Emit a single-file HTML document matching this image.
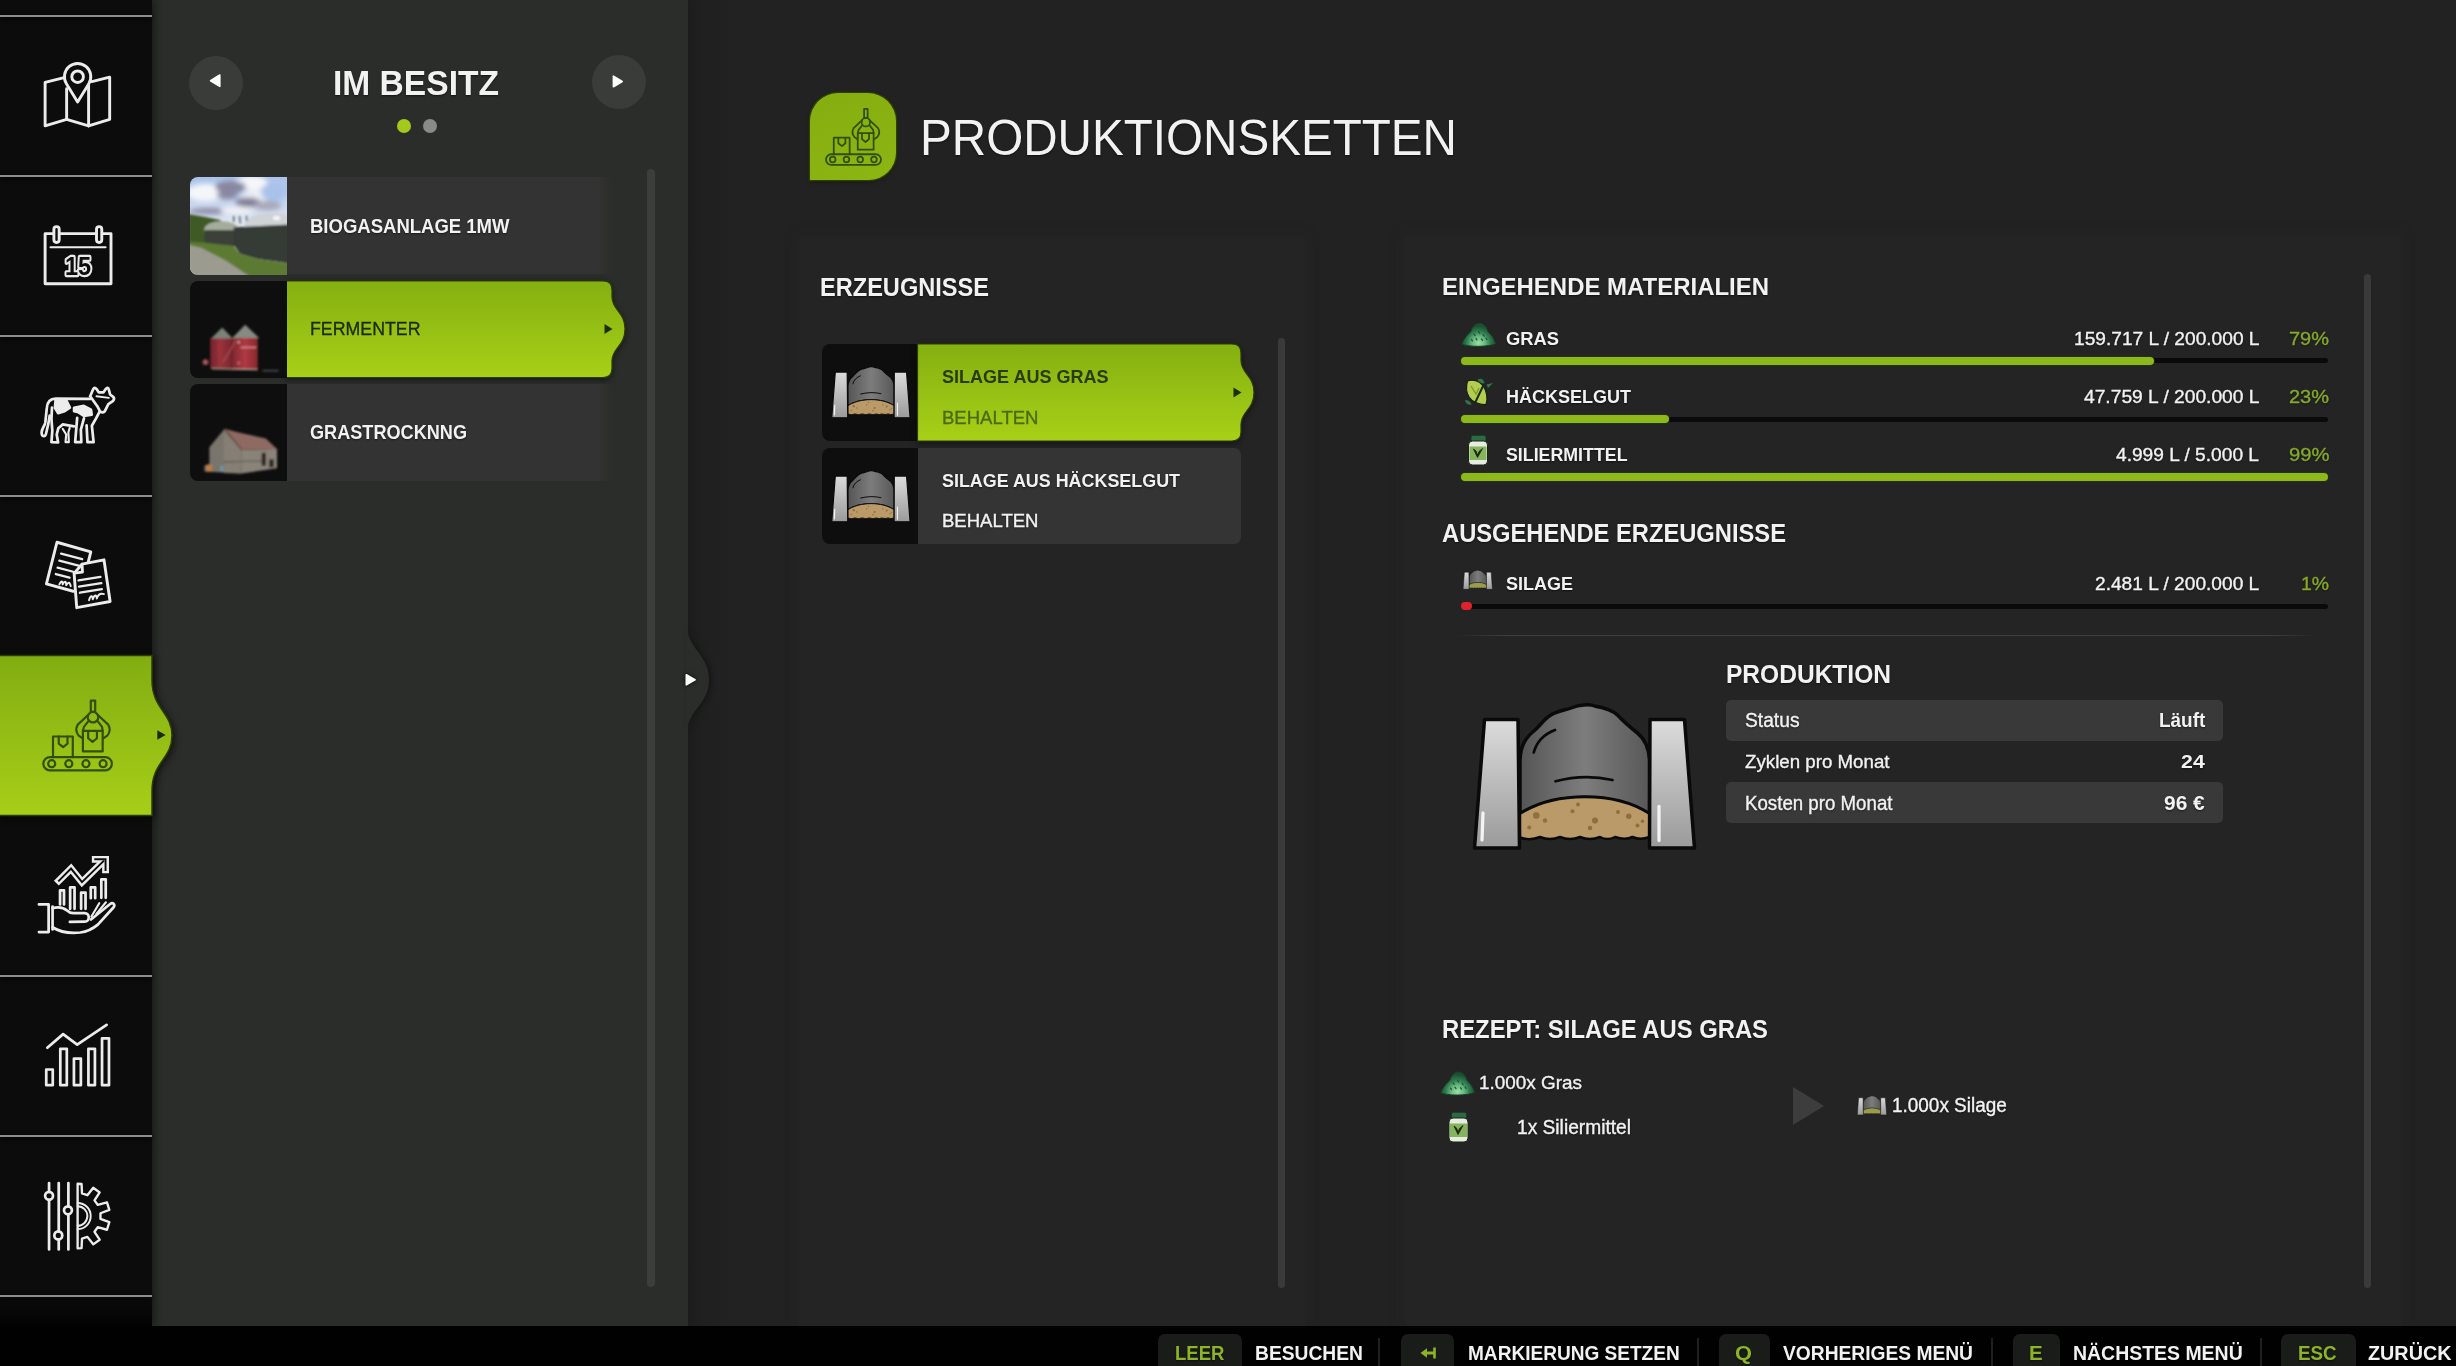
<!DOCTYPE html>
<html lang="de">
<head>
<meta charset="utf-8">
<title>Produktionsketten</title>
<style>
*{box-sizing:border-box;margin:0;padding:0}
html,body{width:2456px;height:1366px;overflow:hidden;background:#222222}
body{position:relative;font-family:"Liberation Sans",sans-serif;color:#f2f2f2}
.abs,.t,.box{position:absolute}
.t{white-space:pre;transform-origin:0 0;display:block}
.sh{text-shadow:0 1px 2px rgba(0,0,0,.55)}
.rg{-webkit-text-stroke:.35px currentColor}
svg{position:absolute;overflow:visible}
/* ---------- backgrounds ---------- */
#main-bg{left:688px;top:0;width:1768px;height:1326px;background:linear-gradient(90deg,#1f1f1f 0,#202020 20px,#222222 48px,#222222 100%)}
.pane{background:#242424;box-shadow:0 0 9px 3px #242424}
#pane-list{left:799px;top:238px;width:506px;height:1088px}
#pane-detail{left:1405px;top:236px;width:996px;height:1090px}
#side2{left:152px;top:0;width:536px;height:1326px;background:#2b2d2a;box-shadow:3px 0 10px rgba(0,0,0,.10)}
#sidebar{left:0;top:0;width:152px;height:1326px;background:#0c0c0c;box-shadow:3px 0 7px rgba(0,0,0,.4)}
.sep{left:0;width:152px;height:2px;background:#8e8e8e;box-shadow:0 2px 5px rgba(0,0,0,.9)}
#footer{left:0;top:1326px;width:2456px;height:40px;background:#010101}
/* ---------- generic pieces ---------- */
.scroll{width:7px;border-radius:4px;background:#3a3a3a}
.item-body{background:#333433;border-radius:0 7px 7px 0}
.fade{border-radius:0;background:linear-gradient(90deg,#323332 0,#323332 95.5%,rgba(50,51,50,0) 100%)}
.thumb{background:#0e0e0e;border-radius:8px 0 0 8px;overflow:hidden}
.track{height:5px;background:#0a0a0a;border-radius:3px}
.fill{height:8px;border-radius:4px;background:#8db81b;box-shadow:0 0 0 1px rgba(40,60,5,.55)}
.row{height:41px;border-radius:5px;background:#393939}
.key{top:1334px;height:32px;border-radius:7px 7px 0 0;background:#191c18}
.vsep{top:1338px;width:2px;height:28px;background:#1f1f1f}
.circle{width:54px;height:54px;border-radius:50%;background:#3a3c3a}
</style>
</head>
<body>

<!-- ======================= MAIN AREA ======================= -->
<main>
<div id="main-bg" class="abs"></div>

<header>
  <div class="abs" id="title-icon" style="left:810px;top:92.5px;width:86px;height:87px;border-radius:28px 28px 27px 0;background:linear-gradient(160deg,#85ad10 0,#8cb613 100%);box-shadow:0 0 0 1.3px #2c3f06, 0 2px 4px rgba(0,0,0,.35)"></div>
  <svg style="left:0;top:0" width="2456" height="200"><g transform="translate(804.84,88.29) scale(0.07054)" fill="none" stroke="#304f09" stroke-width="25" stroke-linejoin="round" stroke-linecap="round">
<rect x="300" y="935" width="780" height="150" rx="75"/>
<circle cx="395" cy="1010" r="40"/><circle cx="590" cy="1010" r="40"/><circle cx="785" cy="1010" r="40"/><circle cx="980" cy="1010" r="40"/>
<path d="M410,935 L410,700 L635,700 L635,935"/>
<path d="M475,702 L475,780 L525,820 L575,780 L575,702"/>
<path d="M750,635 L750,870 L975,870 L975,635 Z"/>
<path d="M810,640 L810,720 L860,762 L910,720 L910,640"/>
<rect x="840" y="292" width="50" height="128"/>
<circle cx="865" cy="480" r="60"/>
<path d="M812,452 L692,565 C668,605 674,655 702,690 L748,722"/>
<path d="M918,452 L1038,565 C1062,605 1056,655 1028,690 L982,722"/>
<path d="M808,530 L762,590 L750,635 M922,530 L968,590 L975,635"/>
</g></svg>
  <h1><span class="t sh" style="left:920.0px;top:113.0px;font-size:49.5px;line-height:49.5px;font-weight:400;color:#f2f2f2;letter-spacing:0.00px;transform:scaleX(0.9618)">PRODUKTIONSKETTEN</span></h1>
</header>

<section id="products">
  <div id="pane-list" class="abs pane"></div>
  <h2><span class="t sh" style="left:819.8px;top:274.6px;font-size:25.5px;line-height:25.5px;font-weight:700;color:#f2f2f2;letter-spacing:0.00px;transform:scaleX(0.9245)">ERZEUGNISSE</span></h2>
  <div class="abs scroll" style="left:1278px;top:338px;height:950px"></div>

  <article>
    <div class="abs thumb" style="left:822px;top:344px;width:96px;height:97px"></div>
    <svg style="left:0;top:0" width="2456" height="1366"><defs>
      <linearGradient id="gsel" x1="0" y1="0" x2="0" y2="1"><stop offset="0" stop-color="#84b011"/><stop offset="1" stop-color="#a8d017"/></linearGradient>
      <filter id="tabsh" x="-10%" y="-20%" width="120%" height="150%" color-interpolation-filters="sRGB"><feDropShadow dx="0" dy="2" stdDeviation="3" flood-color="#000" flood-opacity=".45"/></filter>
    </defs>
      <path filter="url(#tabsh)" fill="url(#gsel)" stroke="#2c3d08" stroke-width="1.2" d="M917.5,344 H1232 Q1241,344 1241,353 V360.5 C1241,373.5 1254,375.5 1254,392.5 C1254,409.5 1241,411.5 1241,424.5 V432 Q1241,441 1232,441 H917.5 Z"/>
      <path fill="#1f2c08" d="M1233.5,387.5 L1241.5,392.5 L1233.5,397.5 Z"/>
    </svg>
    <svg style="left:0;top:0" width="2456" height="1366"><defs>
<linearGradient id="s1p" x1="0" y1="0" x2="0" y2="1"><stop offset="0" stop-color="#dcdcdc"/><stop offset="1" stop-color="#9a9a9a"/></linearGradient>
<linearGradient id="s1h" x1="0" y1="0" x2="1" y2="0"><stop offset="0" stop-color="#555"/><stop offset=".5" stop-color="#7d7d7d"/><stop offset="1" stop-color="#585858"/></linearGradient>
</defs><g transform="translate(819.417,336.597) scale(0.0891)" stroke="#0a0a0a" stroke-width="14" stroke-linejoin="round">
<path d="M320,560 C322,505 340,472 378,442 C398,426 412,400 440,382 C468,362 500,362 530,350 C552,340 598,334 622,345 C660,351 690,360 712,382 C738,410 762,430 790,452 C822,478 836,512 838,560 L838,775 C700,685 460,685 320,775 Z" fill="url(#s1h)"/>
<path d="M375,530 C388,482 420,455 460,440" fill="none" stroke="#0a0a0a" stroke-width="11" stroke-linecap="round"/><path d="M462,645 C540,624 620,624 690,640" fill="none" stroke="#0a0a0a" stroke-width="11" stroke-linecap="round"/>
<path d="M320,775 C460,685 700,685 838,775 L838,868 Q800,882 770,868 Q740,882 700,868 Q670,884 640,868 Q600,884 560,868 Q520,884 480,868 Q440,884 400,868 Q360,884 320,870 Z" fill="#b99a68" stroke-width="10"/>
<circle cx="385" cy="782" r="13" fill="#8f6f3c" stroke="none"/><circle cx="420" cy="802" r="9" fill="#8f6f3c" stroke="none"/><circle cx="357" cy="830" r="8" fill="#8f6f3c" stroke="none"/><circle cx="530" cy="765" r="8" fill="#8f6f3c" stroke="none"/><circle cx="552" cy="738" r="8" fill="#8f6f3c" stroke="none"/><circle cx="620" cy="802" r="12" fill="#8f6f3c" stroke="none"/><circle cx="600" cy="832" r="9" fill="#8f6f3c" stroke="none"/><circle cx="712" cy="768" r="8" fill="#8f6f3c" stroke="none"/><circle cx="755" cy="785" r="11" fill="#8f6f3c" stroke="none"/><circle cx="790" cy="822" r="8" fill="#8f6f3c" stroke="none"/><circle cx="810" cy="805" r="7" fill="#8f6f3c" stroke="none"/>
<path d="M178,398 L312,398 L318,912 L138,912 Z" fill="url(#s1p)"/>
<path d="M840,398 L978,398 L1018,912 L838,912 Z" fill="url(#s1p)"/>
<path d="M172,772 L168,880" stroke="#f4f4f4" stroke-width="13" stroke-linecap="round"/><path d="M876,745 L876,882" stroke="#f4f4f4" stroke-width="13" stroke-linecap="round"/>
</g></svg>
    <span class="t" style="left:942.0px;top:366.9px;font-size:19.0px;line-height:19.0px;font-weight:700;color:#2a3b0a;letter-spacing:0.00px;transform:scaleX(0.9482)">SILAGE AUS GRAS</span>
    <span class="t rg" style="left:942.0px;top:409.0px;font-size:18.5px;line-height:18.5px;font-weight:400;color:#4c6a10;letter-spacing:0.00px;transform:scaleX(1.0021)">BEHALTEN</span>
  </article>

  <article>
    <div class="abs thumb" style="left:822px;top:448px;width:96px;height:96px"></div>
    <div class="abs item-body" style="left:918px;top:448px;width:323px;height:96px"></div>
    <svg style="left:0;top:0" width="2456" height="1366"><defs>
<linearGradient id="s2p" x1="0" y1="0" x2="0" y2="1"><stop offset="0" stop-color="#dcdcdc"/><stop offset="1" stop-color="#9a9a9a"/></linearGradient>
<linearGradient id="s2h" x1="0" y1="0" x2="1" y2="0"><stop offset="0" stop-color="#555"/><stop offset=".5" stop-color="#7d7d7d"/><stop offset="1" stop-color="#585858"/></linearGradient>
</defs><g transform="translate(819.417,440.597) scale(0.0891)" stroke="#0a0a0a" stroke-width="14" stroke-linejoin="round">
<path d="M320,560 C322,505 340,472 378,442 C398,426 412,400 440,382 C468,362 500,362 530,350 C552,340 598,334 622,345 C660,351 690,360 712,382 C738,410 762,430 790,452 C822,478 836,512 838,560 L838,775 C700,685 460,685 320,775 Z" fill="url(#s2h)"/>
<path d="M375,530 C388,482 420,455 460,440" fill="none" stroke="#0a0a0a" stroke-width="11" stroke-linecap="round"/><path d="M462,645 C540,624 620,624 690,640" fill="none" stroke="#0a0a0a" stroke-width="11" stroke-linecap="round"/>
<path d="M320,775 C460,685 700,685 838,775 L838,868 Q800,882 770,868 Q740,882 700,868 Q670,884 640,868 Q600,884 560,868 Q520,884 480,868 Q440,884 400,868 Q360,884 320,870 Z" fill="#b99a68" stroke-width="10"/>
<circle cx="385" cy="782" r="13" fill="#8f6f3c" stroke="none"/><circle cx="420" cy="802" r="9" fill="#8f6f3c" stroke="none"/><circle cx="357" cy="830" r="8" fill="#8f6f3c" stroke="none"/><circle cx="530" cy="765" r="8" fill="#8f6f3c" stroke="none"/><circle cx="552" cy="738" r="8" fill="#8f6f3c" stroke="none"/><circle cx="620" cy="802" r="12" fill="#8f6f3c" stroke="none"/><circle cx="600" cy="832" r="9" fill="#8f6f3c" stroke="none"/><circle cx="712" cy="768" r="8" fill="#8f6f3c" stroke="none"/><circle cx="755" cy="785" r="11" fill="#8f6f3c" stroke="none"/><circle cx="790" cy="822" r="8" fill="#8f6f3c" stroke="none"/><circle cx="810" cy="805" r="7" fill="#8f6f3c" stroke="none"/>
<path d="M178,398 L312,398 L318,912 L138,912 Z" fill="url(#s2p)"/>
<path d="M840,398 L978,398 L1018,912 L838,912 Z" fill="url(#s2p)"/>
<path d="M172,772 L168,880" stroke="#f4f4f4" stroke-width="13" stroke-linecap="round"/><path d="M876,745 L876,882" stroke="#f4f4f4" stroke-width="13" stroke-linecap="round"/>
</g></svg>
    <span class="t sh" style="left:942.0px;top:470.7px;font-size:19.0px;line-height:19.0px;font-weight:700;color:#f2f2f2;letter-spacing:0.00px;transform:scaleX(0.9420)">SILAGE AUS HÄCKSELGUT</span>
    <span class="t sh rg" style="left:942.0px;top:512.4px;font-size:18.5px;line-height:18.5px;font-weight:400;color:#f2f2f2;letter-spacing:0.00px;transform:scaleX(1.0021)">BEHALTEN</span>
  </article>
</section>

<section id="detail">
  <div id="pane-detail" class="abs pane"></div>
  <div class="abs scroll" style="left:2364px;top:274px;height:1014px"></div>

  <h2><span class="t sh" style="left:1442.0px;top:275.3px;font-size:24.5px;line-height:24.5px;font-weight:700;color:#f2f2f2;letter-spacing:0.00px;transform:scaleX(0.9779)">EINGEHENDE MATERIALIEN</span></h2>
  <div class="abs track" style="left:1461px;top:358px;width:867px"></div>
  <div class="abs fill"  style="left:1461px;top:356.5px;width:693px"></div>
  <svg style="left:0;top:0" width="2456" height="1366"><defs>
<radialGradient id="g1" gradientUnits="userSpaceOnUse" cx="1478.5" cy="343" r="17"><stop offset="0" stop-color="#9be0a8"/><stop offset=".38" stop-color="#68b880"/><stop offset=".7" stop-color="#2f7a4e"/><stop offset="1" stop-color="#1c5030"/></radialGradient></defs>
<g transform="translate(0,0)">
<path d="M1461.8,344 C1464,338.5 1467.5,334.5 1471,331.5 C1472,326.5 1475.5,323.3 1479.5,323.3 C1483.5,323.3 1486.8,326.5 1487.8,331.5 C1491.3,334.5 1494,338.5 1495.6,343.6 C1490,347.2 1467,347.2 1461.8,344 Z" fill="url(#g1)" stroke="#17402a" stroke-width="1"/>
<path d="M1474,334 l1.2,1.6 M1478.5,331.5 l1.2,1.8 M1483,334.5 l1.2,1.6 M1476,338.5 l1,1.4 M1481.5,339 l1,1.4 M1486,338 l1,1.6 M1471.5,339.5 l1,1.4" stroke="#1e5a34" stroke-width="1.3" stroke-linecap="round" fill="none"/>
</g></svg> <span class="t sh" style="left:1505.8px;top:328.9px;font-size:19.0px;line-height:19.0px;font-weight:700;color:#f2f2f2;letter-spacing:0.00px;transform:scaleX(0.9653)">GRAS</span> <span class="t sh rg" style="left:2073.5px;top:328.9px;font-size:19.0px;line-height:19.0px;font-weight:400;color:#f2f2f2;letter-spacing:0.00px;transform:scaleX(1.0071)">159.717 L / 200.000 L</span> <span class="t sh rg" style="left:2289.0px;top:328.9px;font-size:19.0px;line-height:19.0px;font-weight:400;color:#85a92a;letter-spacing:0.00px;transform:scaleX(1.0518)">79%</span>

  <div class="abs track" style="left:1461px;top:416.5px;width:867px"></div>
  <div class="abs fill"  style="left:1461px;top:415px;width:208px"></div>
  <svg style="left:0;top:0" width="2456" height="1366">
<path d="M1477.5,379.5 Q1483,377 1484.5,383 Q1480,385 1477.5,379.5 Z M1486.5,384.5 L1493,383 L1488,388 Z M1465,400 Q1466,405.5 1471.5,404.5 Q1470,400 1465,400 Z" fill="#33764a"/>
<path d="M1467.5,381 C1473,379 1479,381 1482.5,385 C1487,391 1488,399 1486,404.5 C1480,405 1472,402 1469,397 C1466,392 1466,386 1467.5,381 Z" fill="#b3cd50" stroke="#141f0a" stroke-width="1.2"/>
<path d="M1484,384 L1474.5,404" stroke="#1c2a10" stroke-width="2"/>
<path d="M1471,386 L1476,394 L1479,388" stroke="#7f9a2e" stroke-width="1.4" fill="none"/>
</svg> <span class="t sh" style="left:1505.8px;top:386.9px;font-size:19.0px;line-height:19.0px;font-weight:700;color:#f2f2f2;letter-spacing:0.00px;transform:scaleX(0.9473)">HÄCKSELGUT</span> <span class="t sh rg" style="left:2083.5px;top:386.9px;font-size:19.0px;line-height:19.0px;font-weight:400;color:#f2f2f2;letter-spacing:0.00px;transform:scaleX(1.0108)">47.759 L / 200.000 L</span> <span class="t sh rg" style="left:2289.0px;top:386.9px;font-size:19.0px;line-height:19.0px;font-weight:400;color:#85a92a;letter-spacing:0.00px;transform:scaleX(1.0518)">23%</span>

  <div class="abs track" style="left:1461px;top:474.5px;width:867px"></div>
  <div class="abs fill"  style="left:1461px;top:473px;width:867px"></div>
  <svg style="left:0;top:0" width="2456" height="1366"><g transform="translate(0,0)">
<rect x="1471" y="435.3" width="15" height="6.5" rx="2" fill="#2c6a42" stroke="#16301f" stroke-width=".8"/>
<rect x="1468.5" y="441" width="19" height="24" rx="4" fill="#e6ecdf" stroke="#1a2416" stroke-width="1"/>
<rect x="1469.5" y="446.5" width="17" height="13.5" fill="#86b45c"/>
<path d="M1473.5,449 L1477.5,457.5 L1482.5,448.5 L1479,451.5 L1477.5,455 L1476,451 Z" fill="#17240f" stroke="#17240f" stroke-width=".8" stroke-linejoin="round"/>
</g></svg> <span class="t sh" style="left:1505.8px;top:444.9px;font-size:19.0px;line-height:19.0px;font-weight:700;color:#f2f2f2;letter-spacing:0.00px;transform:scaleX(0.9359)">SILIERMITTEL</span> <span class="t sh rg" style="left:2116.0px;top:444.9px;font-size:19.0px;line-height:19.0px;font-weight:400;color:#f2f2f2;letter-spacing:0.00px;transform:scaleX(1.0076)">4.999 L / 5.000 L</span> <span class="t sh rg" style="left:2288.5px;top:444.9px;font-size:19.0px;line-height:19.0px;font-weight:400;color:#85a92a;letter-spacing:0.00px;transform:scaleX(1.0649)">99%</span>

  <h2><span class="t sh" style="left:1442.0px;top:520.6px;font-size:25.5px;line-height:25.5px;font-weight:700;color:#f2f2f2;letter-spacing:0.00px;transform:scaleX(0.9302)">AUSGEHENDE ERZEUGNISSE</span></h2>
  <div class="abs track" style="left:1461px;top:603.5px;width:867px"></div>
  <div class="abs" style="left:1461px;top:602px;width:11px;height:8px;border-radius:4px;background:#e0222c"></div>
  <svg style="left:0;top:0" width="2456" height="1366"><defs>
<linearGradient id="x1p" x1="0" y1="0" x2="0" y2="1"><stop offset="0" stop-color="#dcdcdc"/><stop offset="1" stop-color="#9a9a9a"/></linearGradient>
<linearGradient id="x1h" x1="0" y1="0" x2="1" y2="0"><stop offset="0" stop-color="#555"/><stop offset=".5" stop-color="#7d7d7d"/><stop offset="1" stop-color="#585858"/></linearGradient>
</defs><g transform="translate(1458.4579999999999,558.8779999999999) scale(0.0334)" stroke="#0a0a0a" stroke-width="14" stroke-linejoin="round">
<path d="M320,560 C322,505 340,472 378,442 C398,426 412,400 440,382 C468,362 500,362 530,350 C552,340 598,334 622,345 C660,351 690,360 712,382 C738,410 762,430 790,452 C822,478 836,512 838,560 L838,775 C700,685 460,685 320,775 Z" fill="url(#x1h)"/>

<path d="M320,775 C460,685 700,685 838,775 L838,868 Q800,882 770,868 Q740,882 700,868 Q670,884 640,868 Q600,884 560,868 Q520,884 480,868 Q440,884 400,868 Q360,884 320,870 Z" fill="#9c9a4c" stroke-width="10"/>

<path d="M178,398 L312,398 L318,912 L138,912 Z" fill="url(#x1p)"/>
<path d="M840,398 L978,398 L1018,912 L838,912 Z" fill="url(#x1p)"/>

</g></svg> <span class="t sh" style="left:1505.8px;top:573.9px;font-size:19.0px;line-height:19.0px;font-weight:700;color:#f2f2f2;letter-spacing:0.00px;transform:scaleX(0.9472)">SILAGE</span> <span class="t sh rg" style="left:2094.8px;top:573.9px;font-size:19.0px;line-height:19.0px;font-weight:400;color:#f2f2f2;letter-spacing:0.00px;transform:scaleX(1.0073)">2.481 L / 200.000 L</span> <span class="t sh rg" style="left:2301.0px;top:573.9px;font-size:19.0px;line-height:19.0px;font-weight:400;color:#85a92a;letter-spacing:0.00px;transform:scaleX(1.0193)">1%</span>

  <div class="abs" style="left:1456px;top:635px;width:862px;height:1px;background:linear-gradient(90deg,rgba(64,64,64,0),#404040 6%,#404040 94%,rgba(64,64,64,0))"></div>

  <svg style="left:0;top:0" width="2456" height="1366"><defs>
<linearGradient id="slp" x1="0" y1="0" x2="0" y2="1"><stop offset="0" stop-color="#dcdcdc"/><stop offset="1" stop-color="#9a9a9a"/></linearGradient>
<linearGradient id="slh" x1="0" y1="0" x2="1" y2="0"><stop offset="0" stop-color="#555"/><stop offset=".5" stop-color="#7d7d7d"/><stop offset="1" stop-color="#585858"/></linearGradient>
</defs><g transform="translate(1440,620) scale(0.25)" stroke="#0a0a0a" stroke-width="14" stroke-linejoin="round">
<path d="M320,560 C322,505 340,472 378,442 C398,426 412,400 440,382 C468,362 500,362 530,350 C552,340 598,334 622,345 C660,351 690,360 712,382 C738,410 762,430 790,452 C822,478 836,512 838,560 L838,775 C700,685 460,685 320,775 Z" fill="url(#slh)"/>
<path d="M375,530 C388,482 420,455 460,440" fill="none" stroke="#0a0a0a" stroke-width="11" stroke-linecap="round"/><path d="M462,645 C540,624 620,624 690,640" fill="none" stroke="#0a0a0a" stroke-width="11" stroke-linecap="round"/>
<path d="M320,775 C460,685 700,685 838,775 L838,868 Q800,882 770,868 Q740,882 700,868 Q670,884 640,868 Q600,884 560,868 Q520,884 480,868 Q440,884 400,868 Q360,884 320,870 Z" fill="#b99a68" stroke-width="10"/>
<circle cx="385" cy="782" r="13" fill="#8f6f3c" stroke="none"/><circle cx="420" cy="802" r="9" fill="#8f6f3c" stroke="none"/><circle cx="357" cy="830" r="8" fill="#8f6f3c" stroke="none"/><circle cx="530" cy="765" r="8" fill="#8f6f3c" stroke="none"/><circle cx="552" cy="738" r="8" fill="#8f6f3c" stroke="none"/><circle cx="620" cy="802" r="12" fill="#8f6f3c" stroke="none"/><circle cx="600" cy="832" r="9" fill="#8f6f3c" stroke="none"/><circle cx="712" cy="768" r="8" fill="#8f6f3c" stroke="none"/><circle cx="755" cy="785" r="11" fill="#8f6f3c" stroke="none"/><circle cx="790" cy="822" r="8" fill="#8f6f3c" stroke="none"/><circle cx="810" cy="805" r="7" fill="#8f6f3c" stroke="none"/>
<path d="M178,398 L312,398 L318,912 L138,912 Z" fill="url(#slp)"/>
<path d="M840,398 L978,398 L1018,912 L838,912 Z" fill="url(#slp)"/>
<path d="M172,772 L168,880" stroke="#f4f4f4" stroke-width="13" stroke-linecap="round"/><path d="M876,745 L876,882" stroke="#f4f4f4" stroke-width="13" stroke-linecap="round"/>
</g></svg>
  <h2><span class="t sh" style="left:1726.0px;top:661.7px;font-size:25.5px;line-height:25.5px;font-weight:700;color:#f2f2f2;letter-spacing:0.00px;transform:scaleX(0.9625)">PRODUKTION</span></h2>
  <div class="abs row" style="left:1726px;top:699.5px;width:496.5px"></div>
  <span class="t sh rg" style="left:1744.5px;top:710.9px;font-size:19.5px;line-height:19.5px;font-weight:400;color:#f2f2f2;letter-spacing:0.00px;transform:scaleX(0.9856)">Status</span> <span class="t sh" style="left:2158.5px;top:710.9px;font-size:19.5px;line-height:19.5px;font-weight:700;color:#f2f2f2;letter-spacing:0.00px;transform:scaleX(0.9705)">Läuft</span>
  <span class="t sh rg" style="left:1744.5px;top:751.9px;font-size:19.0px;line-height:19.0px;font-weight:400;color:#f2f2f2;letter-spacing:0.00px;transform:scaleX(0.9844)">Zyklen pro Monat</span> <span class="t sh" style="left:2181.0px;top:752.1px;font-size:19.0px;line-height:19.0px;font-weight:700;color:#f2f2f2;letter-spacing:0.06px;transform:scaleX(1.1200)">24</span>
  <div class="abs row" style="left:1726px;top:782px;width:496.5px"></div>
  <span class="t sh rg" style="left:1744.5px;top:793.6px;font-size:19.5px;line-height:19.5px;font-weight:400;color:#f2f2f2;letter-spacing:0.00px;transform:scaleX(0.9582)">Kosten pro Monat</span> <span class="t sh" style="left:2164.0px;top:793.8px;font-size:19.5px;line-height:19.5px;font-weight:700;color:#f2f2f2;letter-spacing:0.00px;transform:scaleX(1.0737)">96 €</span>

  <h2><span class="t sh" style="left:1442.0px;top:1016.7px;font-size:25.5px;line-height:25.5px;font-weight:700;color:#f2f2f2;letter-spacing:0.00px;transform:scaleX(0.9341)">REZEPT: SILAGE AUS GRAS</span></h2>
  <svg style="left:0;top:0" width="2456" height="1366"><defs>
<radialGradient id="g2" gradientUnits="userSpaceOnUse" cx="1478.5" cy="343" r="17"><stop offset="0" stop-color="#9be0a8"/><stop offset=".38" stop-color="#68b880"/><stop offset=".7" stop-color="#2f7a4e"/><stop offset="1" stop-color="#1c5030"/></radialGradient></defs>
<g transform="translate(-21,748.7)">
<path d="M1461.8,344 C1464,338.5 1467.5,334.5 1471,331.5 C1472,326.5 1475.5,323.3 1479.5,323.3 C1483.5,323.3 1486.8,326.5 1487.8,331.5 C1491.3,334.5 1494,338.5 1495.6,343.6 C1490,347.2 1467,347.2 1461.8,344 Z" fill="url(#g2)" stroke="#17402a" stroke-width="1"/>
<path d="M1474,334 l1.2,1.6 M1478.5,331.5 l1.2,1.8 M1483,334.5 l1.2,1.6 M1476,338.5 l1,1.4 M1481.5,339 l1,1.4 M1486,338 l1,1.6 M1471.5,339.5 l1,1.4" stroke="#1e5a34" stroke-width="1.3" stroke-linecap="round" fill="none"/>
</g></svg> <span class="t sh rg" style="left:1479.0px;top:1072.7px;font-size:19.0px;line-height:19.0px;font-weight:400;color:#f2f2f2;letter-spacing:0.00px;transform:scaleX(0.9952)">1.000x Gras</span>
  <svg style="left:0;top:0" width="2456" height="1366"><g transform="translate(-19.5,677)">
<rect x="1471" y="435.3" width="15" height="6.5" rx="2" fill="#2c6a42" stroke="#16301f" stroke-width=".8"/>
<rect x="1468.5" y="441" width="19" height="24" rx="4" fill="#e6ecdf" stroke="#1a2416" stroke-width="1"/>
<rect x="1469.5" y="446.5" width="17" height="13.5" fill="#86b45c"/>
<path d="M1473.5,449 L1477.5,457.5 L1482.5,448.5 L1479,451.5 L1477.5,455 L1476,451 Z" fill="#17240f" stroke="#17240f" stroke-width=".8" stroke-linejoin="round"/>
</g></svg> <span class="t sh rg" style="left:1516.5px;top:1118.0px;font-size:19.5px;line-height:19.5px;font-weight:400;color:#f2f2f2;letter-spacing:0.00px;transform:scaleX(0.9832)">1x Siliermittel</span>
  <svg style="left:1791px;top:1086px" width="34" height="40"><path d="M2,1 L33,20 L2,39 Z" fill="#3d3d3d"/></svg>
  <svg style="left:0;top:0" width="2456" height="1366"><defs>
<linearGradient id="x2p" x1="0" y1="0" x2="0" y2="1"><stop offset="0" stop-color="#dcdcdc"/><stop offset="1" stop-color="#9a9a9a"/></linearGradient>
<linearGradient id="x2h" x1="0" y1="0" x2="1" y2="0"><stop offset="0" stop-color="#555"/><stop offset=".5" stop-color="#7d7d7d"/><stop offset="1" stop-color="#585858"/></linearGradient>
</defs><g transform="translate(1852.658,1084.478) scale(0.0334)" stroke="#0a0a0a" stroke-width="14" stroke-linejoin="round">
<path d="M320,560 C322,505 340,472 378,442 C398,426 412,400 440,382 C468,362 500,362 530,350 C552,340 598,334 622,345 C660,351 690,360 712,382 C738,410 762,430 790,452 C822,478 836,512 838,560 L838,775 C700,685 460,685 320,775 Z" fill="url(#x2h)"/>

<path d="M320,775 C460,685 700,685 838,775 L838,868 Q800,882 770,868 Q740,882 700,868 Q670,884 640,868 Q600,884 560,868 Q520,884 480,868 Q440,884 400,868 Q360,884 320,870 Z" fill="#9c9a4c" stroke-width="10"/>

<path d="M178,398 L312,398 L318,912 L138,912 Z" fill="url(#x2p)"/>
<path d="M840,398 L978,398 L1018,912 L838,912 Z" fill="url(#x2p)"/>

</g></svg> <span class="t sh rg" style="left:1892.0px;top:1096.1px;font-size:19.5px;line-height:19.5px;font-weight:400;color:#f2f2f2;letter-spacing:0.00px;transform:scaleX(0.9710)">1.000x Silage</span>
</section>
</main>

<!-- ======================= OWNED LIST PANEL ======================= -->
<aside id="owned">
  <div id="side2" class="abs"></div>
  <svg style="left:0;top:0" width="2456" height="1366">
    <defs><filter id="bsh" x="-50%" y="-20%" width="250%" height="140%" color-interpolation-filters="sRGB"><feDropShadow dx="3" dy="0" stdDeviation="3" flood-color="#000" flood-opacity=".3"/></filter></defs>
    <path filter="url(#bsh)" fill="#2b2d2a" d="M687,628 C689,650 709,655 709,679.5 C709,704 689,709 687,731 Z"/>
    <path fill="#ffffff" d="M686.3,674.8 L695,679.8 L686.3,684.8 Z" stroke="#fff" stroke-width="1.6" stroke-linejoin="round" style="filter:drop-shadow(0 0 2px rgba(0,0,0,.8))"/>
  </svg>

  <div class="abs circle" style="left:189px;top:55.5px"></div>
  <svg style="left:0;top:0" width="700" height="160"><path d="M210.6,80.7 L219.8,75 L219.8,86.4 Z" fill="#fff" stroke="#fff" stroke-width="1.6" stroke-linejoin="round"/></svg>
  <div class="abs circle" style="left:591.5px;top:55px"></div>
  <svg style="left:0;top:0" width="700" height="160"><path d="M622.2,81.5 L613.4,76.2 L613.4,86.8 Z" fill="#fff" stroke="#fff" stroke-width="1.6" stroke-linejoin="round"/></svg>
  <h2><span class="t sh" style="left:333.0px;top:65.4px;font-size:35.0px;line-height:35.0px;font-weight:700;color:#f2f2f2;letter-spacing:0.00px;transform:scaleX(0.9592)">IM BESITZ</span></h2>
  <div class="abs" style="left:397px;top:119px;width:14px;height:14px;border-radius:50%;background:#a4c81c"></div>
  <div class="abs" style="left:423px;top:119px;width:14px;height:14px;border-radius:50%;background:#8a8a8a"></div>
  <div class="abs scroll" style="left:646.5px;top:169px;width:8px;height:1118px;background:#3b3e3b"></div>

  <article>
    <svg style="left:189.5px;top:177px;border-radius:8px 0 0 8px;overflow:hidden" width="97.5" height="97.5" viewBox="60 65 1205 1210" preserveAspectRatio="none">
<defs><linearGradient id="sky" x1="0" y1="0" x2="0" y2="1"><stop offset="0" stop-color="#a9c2e8"/><stop offset=".4" stop-color="#d6e0f0"/><stop offset=".55" stop-color="#eceff4"/></linearGradient>
<filter id="bl"><feGaussianBlur stdDeviation="34"/></filter><filter id="bl2" x="-5%" y="-5%" width="110%" height="110%"><feGaussianBlur stdDeviation="14"/></filter></defs>
<rect x="60" y="65" width="1205" height="1210" fill="url(#sky)"/>
<g filter="url(#bl)">
<ellipse cx="250" cy="260" rx="230" ry="110" fill="#f4f6fa"/><ellipse cx="900" cy="300" rx="200" ry="70" fill="#eef1f6"/><ellipse cx="820" cy="140" rx="200" ry="90" fill="#f6f7fa"/>
<ellipse cx="560" cy="190" rx="190" ry="80" fill="#8886a0"/><ellipse cx="520" cy="290" rx="130" ry="50" fill="#8a88a2"/>
<ellipse cx="780" cy="380" rx="160" ry="60" fill="#807e98"/><ellipse cx="1020" cy="420" rx="170" ry="60" fill="#a9a8ba"/>
<ellipse cx="300" cy="490" rx="260" ry="40" fill="#8d8ca8"/><ellipse cx="1100" cy="250" rx="160" ry="120" fill="#a8c2ea"/>
<ellipse cx="640" cy="480" rx="200" ry="50" fill="#eef0f4"/>
</g>
<g filter="url(#bl2)">
<path d="M40,525 L220,555 L440,600 L440,900 L40,900 Z" fill="#405a26"/>
<ellipse cx="1060" cy="660" rx="330" ry="150" fill="#cfd2d6"/>
<ellipse cx="450" cy="722" rx="215" ry="112" fill="#a4ad9d"/>
<path d="M240,722 L662,722 L662,925 L240,905 Z" fill="#3a4038"/>
<path d="M600,690 L1290,655 L1290,1140 L900,1082 L680,1022 L600,905 Z" fill="#363a35"/>
<path d="M40,868 L250,880 L600,922 L680,1022 L900,1082 L1290,1142 L1290,1300 L40,1300 Z" fill="#5b7a30"/>
<path d="M40,905 L200,942 L500,1102 L800,1300 L40,1300 Z" fill="#9b9b8f"/>
<path d="M600,550 L600,625 M672,550 L682,645 M760,545 L760,612" stroke="#4a4c52" stroke-width="16"/>
<ellipse cx="1130" cy="575" rx="45" ry="30" fill="#f4f4f4"/>
</g></svg>
    <div class="abs item-body fade" style="left:287px;top:177px;width:326px;height:97px"></div>
    <span class="t sh" style="left:310.0px;top:215.6px;font-size:20.0px;line-height:20.0px;font-weight:700;color:#f2f2f2;letter-spacing:0.00px;transform:scaleX(0.9255)">BIOGASANLAGE 1MW</span>
  </article>
  <article>
    <svg style="left:0;top:0" width="2456" height="1366">
      <path filter="url(#tabsh)" fill="url(#gsel)" stroke="#2c3d08" stroke-width="1.2" d="M286,281 H603 Q612,281 612,290 V297 C612,310 625,312 625,329 C625,346 612,348 612,361 V368.5 Q612,377.5 603,377.5 H286 Z"/>
      <path fill="#1f2c08" d="M604.5,324 L612.5,329 L604.5,334 Z"/>
    </svg>
    <svg style="left:190px;top:280.5px;border-radius:8px 0 0 8px;overflow:hidden" width="96.5" height="97" viewBox="60 45 1198 1205" preserveAspectRatio="none">
<defs><linearGradient id="rs1" x1="0" y1="0" x2="1" y2="0"><stop offset="0" stop-color="#6e222a"/><stop offset=".45" stop-color="#9c323c"/><stop offset="1" stop-color="#7a2830"/></linearGradient>
<linearGradient id="rs2" x1="0" y1="0" x2="1" y2="0"><stop offset="0" stop-color="#7e262e"/><stop offset=".5" stop-color="#b03a44"/><stop offset="1" stop-color="#86282f"/></linearGradient>
<filter id="fb"><feGaussianBlur stdDeviation="10"/></filter></defs>
<rect x="60" y="45" width="1210" height="1225" fill="#0e0e0e"/>
<g filter="url(#fb)">
<rect x="310" y="752" width="268" height="380" fill="url(#rs1)"/>
<path d="M460,622 L322,758 L590,758 Z" fill="#7c827a"/>
<rect x="580" y="746" width="322" height="400" fill="url(#rs2)"/>
<path d="M745,588 L585,752 L918,752 Z" fill="#858b82"/>
<path d="M640,772 L470,1052" stroke="#a85050" stroke-width="16"/>
<path d="M690,870 L882,870" stroke="#e28c8c" stroke-width="16"/>
<circle cx="252" cy="1052" r="36" fill="#a8545c"/>
<path d="M330,1136 L900,1148" stroke="#c9b6a6" stroke-width="12"/>
<path d="M960,1160 L1160,1160" stroke="#8c8c9c" stroke-width="10"/>
<circle cx="665" cy="805" r="12" fill="#f0d0d0"/><circle cx="665" cy="1065" r="10" fill="#e8b8b8"/>
</g></svg>
    <span class="t rg" style="left:310.0px;top:318.9px;font-size:19.0px;line-height:19.0px;font-weight:400;color:#1d2a08;letter-spacing:0.00px;transform:scaleX(0.9346)">FERMENTER</span>
  </article>
  <article>
    <svg style="left:190px;top:384px;border-radius:8px 0 0 8px;overflow:hidden" width="96.5" height="97" viewBox="60 45 1198 1205" preserveAspectRatio="none">
<defs><filter id="bb"><feGaussianBlur stdDeviation="11"/></filter></defs>
<rect x="60" y="45" width="1210" height="1225" fill="#0e0e0e"/>
<g filter="url(#bb)">
<path d="M490,602 L300,832 L300,1040 L240,1058 L240,1132 L700,1156 L700,862 Z" fill="#7a746c"/>
<path d="M480,640 L700,862 L700,1156 L480,1150 Z" fill="#857f75"/>
<path d="M700,862 L1140,852 L1140,1092 L700,1156 Z" fill="#8a8378"/>
<path d="M490,600 L640,642 L1000,722 L1140,852 L700,862 Z" fill="#8e6a62"/>
<path d="M490,600 L700,862" stroke="#5a3e3a" stroke-width="14"/>
<path d="M480,1012 L1000,1000" stroke="#5e5a50" stroke-width="14"/>
<rect x="950" y="900" width="52" height="160" fill="#2a2624"/><rect x="1042" y="980" width="58" height="100" fill="#2a2624"/>
<rect x="262" y="1050" width="70" height="82" fill="#c27c3c"/><rect x="440" y="1060" width="32" height="72" fill="#6a9cb2"/>
</g></svg>
    <div class="abs item-body fade" style="left:287px;top:384px;width:326px;height:97px"></div>
    <span class="t sh" style="left:310.0px;top:421.8px;font-size:20.0px;line-height:20.0px;font-weight:700;color:#f2f2f2;letter-spacing:0.00px;transform:scaleX(0.9057)">GRASTROCKNNG</span>
  </article>
</aside>

<!-- ======================= ICON SIDEBAR ======================= -->
<nav id="nav">
  <div id="sidebar" class="abs"></div>
  <div class="abs sep" style="top:14.5px"></div>
  <div class="abs sep" style="top:174.5px"></div>
  <div class="abs sep" style="top:334.5px"></div>
  <div class="abs sep" style="top:494.5px"></div>
  <div class="abs sep" style="top:974.5px"></div>
  <div class="abs sep" style="top:1134.5px"></div>
  <div class="abs sep" style="top:1294.5px"></div>
  <div class="abs" style="left:0;top:1297px;width:152px;height:29px;background:linear-gradient(180deg,rgba(0,0,0,0),rgba(0,0,0,.85))"></div>
  <svg style="left:0;top:0" width="2456" height="1366">
    <defs>
      <linearGradient id="gnav" x1="0" y1="0" x2="0" y2="1"><stop offset="0" stop-color="#82ad12"/><stop offset="1" stop-color="#a7ce18"/></linearGradient>
      <filter id="navsh" x="-20%" y="-10%" width="150%" height="125%" color-interpolation-filters="sRGB"><feDropShadow dx="2" dy="2" stdDeviation="3.5" flood-color="#000" flood-opacity=".55"/></filter>
    </defs>
    <path filter="url(#navsh)" fill="url(#gnav)" stroke="#2c3d08" stroke-width="1.5" d="M-2,655.5 H152 V680 C152,709 172,712 172,735.5 C172,759 152,762 152,791 V815.5 H-2 Z"/>
    <path fill="#1c2a08" d="M157.3,730.3 L165.6,735 L157.3,739.7 Z"/>
  </svg>
  <svg style="left:0;top:0" width="180" height="1326"><g transform="translate(17,35) scale(0.08785)" fill="none" stroke="#ececec" stroke-width="33" stroke-linejoin="round" stroke-linecap="round">
<path d="M525,488 L320,540 L320,1035 L565,960 L565,612"/>
<path d="M565,960 L815,1035 L815,572"/>
<path d="M852,530 L1055,480 L1055,960 L815,1035"/>
<path d="M690,762 L562.4,553.9 A150,150 0 1 1 817.6,553.9 Z"/>
<circle cx="690" cy="475" r="66"/>
</g><g transform="translate(17,195) scale(0.08785)" fill="none" stroke="#ececec" stroke-width="33" stroke-linejoin="round" stroke-linecap="round">
<path d="M402,440 L320,440 L320,1010 L1070,1010 L1070,440 L985,440"/>
<path d="M500,440 L885,440"/>
<rect x="420" y="360" width="60" height="180" rx="30"/>
<rect x="905" y="360" width="60" height="180" rx="30"/>
<path d="M382,595 L1008,595" stroke-width="24"/>
<text x="546" y="906" font-family="Liberation Sans, sans-serif" font-weight="700" font-size="303" textLength="298" opacity="0.99" lengthAdjust="spacingAndGlyphs" fill="#0c0c0c" stroke="#ececec" stroke-width="50" stroke-linejoin="round" paint-order="stroke fill">15</text>
</g><g transform="translate(17,355) scale(0.08785)" fill="none" stroke="#ececec" stroke-width="31" stroke-linejoin="round" stroke-linecap="round">
<path d="M835,500 L440,497 C375,500 345,535 340,600 L322,770 C316,810 280,835 280,885 C282,935 322,935 332,890 C348,830 362,770 372,690"/>
<path d="M398,600 L392,730 L402,860 L392,992 L468,996 L452,905 L470,835 L520,790 L650,812"/>
<path d="M520,840 L560,905 L552,992 L590,992 L585,880 L600,830" stroke-width="24"/>
<path d="M685,715 L662,992 L732,992 L727,850 L762,722"/>
<path d="M792,800 L802,992 L872,992 L852,805 L900,722 L942,642"/>
<path d="M832,472 L868,388 Q882,358 906,388 L930,425 L985,425 L1010,388 Q1034,358 1046,396 L1060,450 L1098,480 Q1114,500 1090,526 L1040,560 L1000,640 Q972,666 944,640 L912,580 L835,472"/>
<path d="M905,470 L1045,488" stroke-width="22"/>
<path d="M440,512 L562,520 L602,600 L542,640 L468,662 L432,600 Z" fill="#ececec"/>
<path d="M650,602 L760,580 L842,622 L850,680 L762,692 L700,652 L650,640 Z" fill="#ececec"/>
</g><g transform="translate(17,515) scale(0.08785)" fill="none" stroke="#ececec" stroke-width="33" stroke-linejoin="round" stroke-linecap="round">
<path d="M640,868 L335,785 L455,310 L840,420 L800,580"/>
<path d="M502,440 L742,502 M482,520 L722,582 M462,600 L640,646 M442,672 L598,714" stroke-width="26"/>
<path d="M482,790 C500,750 520,740 520,790 C540,750 560,745 560,800 C585,760 600,760 612,810" stroke-width="22"/>
<path d="M740,560 L990,510 L1060,985 L680,1055 L650,665 Z" fill="#0c0c0c"/>
<path d="M740,560 L745,650 L652,662"/>
<path d="M700,745 L950,705 M706,815 L960,775 M716,885 L966,845" stroke-width="26"/>
<path d="M820,970 C835,915 860,905 862,960 C880,905 905,900 908,950 C925,900 960,890 990,900" stroke-width="22"/>
</g><g transform="translate(17,675) scale(0.08785)" fill="none" stroke="#304f09" stroke-width="25" stroke-linejoin="round" stroke-linecap="round">
<rect x="300" y="935" width="780" height="150" rx="75"/>
<circle cx="395" cy="1010" r="40"/><circle cx="590" cy="1010" r="40"/><circle cx="785" cy="1010" r="40"/><circle cx="980" cy="1010" r="40"/>
<path d="M410,935 L410,700 L635,700 L635,935"/>
<path d="M475,702 L475,780 L525,820 L575,780 L575,702"/>
<path d="M750,635 L750,870 L975,870 L975,635 Z"/>
<path d="M810,640 L810,720 L860,762 L910,720 L910,640"/>
<rect x="840" y="292" width="50" height="128"/>
<circle cx="865" cy="480" r="60"/>
<path d="M812,452 L692,565 C668,605 674,655 702,690 L748,722"/>
<path d="M918,452 L1038,565 C1062,605 1056,655 1028,690 L982,722"/>
<path d="M808,530 L762,590 L750,635 M922,530 L968,590 L975,635"/>
</g><g transform="translate(17,835) scale(0.08785)" fill="none" stroke="#ececec" stroke-width="31" stroke-linejoin="round" stroke-linecap="round">
<path d="M250,790 L360,790 L360,1105 L250,1105"/>
<path d="M405,815 L405,1075"/>
<path d="M405,832 C470,815 530,825 570,860 C590,880 612,890 640,890 L770,890 C832,890 832,986 770,986 L602,990"/>
<path d="M405,1050 C480,1100 600,1122 720,1110 C800,1100 860,1070 920,1020 L1100,822 C1122,790 1090,760 1060,786 L842,962"/>
<path d="M846,930 L936,776 M902,900 L1012,766" stroke-width="24"/>
<path d="M490,790 L490,630 L535,630 L535,790"/>
<path d="M605,840 L605,595 L655,595 L655,840"/>
<path d="M730,840 L730,655 L780,655 L780,840"/>
<path d="M840,720 L840,595 L890,595 L890,720"/>
<path d="M960,715 L960,505 L1010,505 L1010,715"/>
<g stroke-linecap="butt" stroke-linejoin="miter">
<path d="M448,548 L615,382 L740,537 L990,292" stroke-width="78"/>
<path d="M852,277 L1008,277 L1008,436" stroke-width="78"/>
<path d="M470,528 L615,382 L740,537 L990,292" stroke="#0c0c0c" stroke-width="22"/>
<path d="M880,277 L1008,277 L1008,410" stroke="#0c0c0c" stroke-width="22"/>
</g>
</g><g transform="translate(17,995) scale(0.08785)" fill="none" stroke="#ececec" stroke-width="31" stroke-linejoin="round" stroke-linecap="round">
<rect x="333" y="848" width="74" height="179"/>
<rect x="493" y="613" width="74" height="414"/>
<rect x="648" y="723" width="79" height="304"/>
<rect x="813" y="613" width="74" height="414"/>
<rect x="968" y="493" width="79" height="534"/>
<path d="M345,600 L525,445 L685,565 L1020,340" stroke-width="31"/>
</g><g transform="translate(17,1155) scale(0.08785)" fill="none" stroke="#ececec" stroke-width="31" stroke-linejoin="round" stroke-linecap="round">
<path d="M365,320 L365,420 M365,510 L365,1075 M475,320 L475,870 M475,960 L475,1075 M585,320 L585,585 M585,675 L585,1075"/>
<circle cx="365" cy="465" r="45"/><circle cx="580" cy="630" r="45"/><circle cx="470" cy="915" r="45"/>
<path d="M690,327 L735,330 L740,438 L801,458 L868,373 L941,426 L882,516 L919,568 L1024,539 L1051,625 L950,663 L950,727 L1051,765 L1024,851 L919,822 L882,874 L941,964 L868,1017 L801,932 L740,952 L735,1060 L690,1063 Z" stroke-width="27"/>
<path d="M690,546 A149,149 0 0 1 690,844" stroke-width="22"/>
<path d="M690,584 A111,111 0 0 1 690,806" stroke-width="22"/>
</g></svg>
</nav>

<!-- ======================= FOOTER / KEY HINTS ======================= -->
<footer>
  <div id="footer" class="abs"></div>
  <div class="abs key" style="left:1158px;width:84px"></div><span class="t sh" style="left:1174.6px;top:1342.8px;font-size:20.5px;line-height:20.5px;font-weight:700;color:#8db424;letter-spacing:0.00px;transform:scaleX(0.9033)">LEER</span> <span class="t sh" style="left:1255.0px;top:1342.8px;font-size:20.5px;line-height:20.5px;font-weight:700;color:#f2f2f2;letter-spacing:0.00px;transform:scaleX(0.9387)">BESUCHEN</span>
  <div class="abs vsep" style="left:1378px"></div>
  <div class="abs key" style="left:1401px;width:52.5px"></div>
  <svg style="left:1419px;top:1346px" width="18" height="14"><path d="M1.5,7 L8,2.2 V5.4 H14.2 V1.5 H16.8 V12.5 H14.2 V8.6 H8 V11.8 Z" fill="#8db424"/></svg>
  <span class="t sh" style="left:1467.8px;top:1342.8px;font-size:20.5px;line-height:20.5px;font-weight:700;color:#f2f2f2;letter-spacing:0.00px;transform:scaleX(0.9293)">MARKIERUNG SETZEN</span>
  <div class="abs vsep" style="left:1696.5px"></div>
  <div class="abs key" style="left:1718.5px;width:51px"></div><span class="t sh" style="left:1735.4px;top:1342.8px;font-size:20.5px;line-height:20.5px;font-weight:700;color:#8db424;letter-spacing:0.00px;transform:scaleX(1.0656)">Q</span> <span class="t sh" style="left:1782.8px;top:1342.8px;font-size:20.5px;line-height:20.5px;font-weight:700;color:#f2f2f2;letter-spacing:0.00px;transform:scaleX(0.9371)">VORHERIGES MENÜ</span>
  <div class="abs vsep" style="left:1990.5px"></div>
  <div class="abs key" style="left:2013px;width:47px"></div><span class="t sh" style="left:2029.3px;top:1342.8px;font-size:20.5px;line-height:20.5px;font-weight:700;color:#8db424;letter-spacing:0.00px;transform:scaleX(1.0009)">E</span> <span class="t sh" style="left:2072.7px;top:1342.8px;font-size:20.5px;line-height:20.5px;font-weight:700;color:#f2f2f2;letter-spacing:0.00px;transform:scaleX(0.9490)">NÄCHSTES MENÜ</span>
  <div class="abs vsep" style="left:2259.5px"></div>
  <div class="abs key" style="left:2281px;width:74.5px"></div><span class="t sh" style="left:2298.4px;top:1342.8px;font-size:20.5px;line-height:20.5px;font-weight:700;color:#8db424;letter-spacing:0.00px;transform:scaleX(0.9156)">ESC</span> <span class="t sh" style="left:2367.7px;top:1342.8px;font-size:20.5px;line-height:20.5px;font-weight:700;color:#f2f2f2;letter-spacing:0.00px;transform:scaleX(0.9648)">ZURÜCK</span>
</footer>

</body>
</html>
